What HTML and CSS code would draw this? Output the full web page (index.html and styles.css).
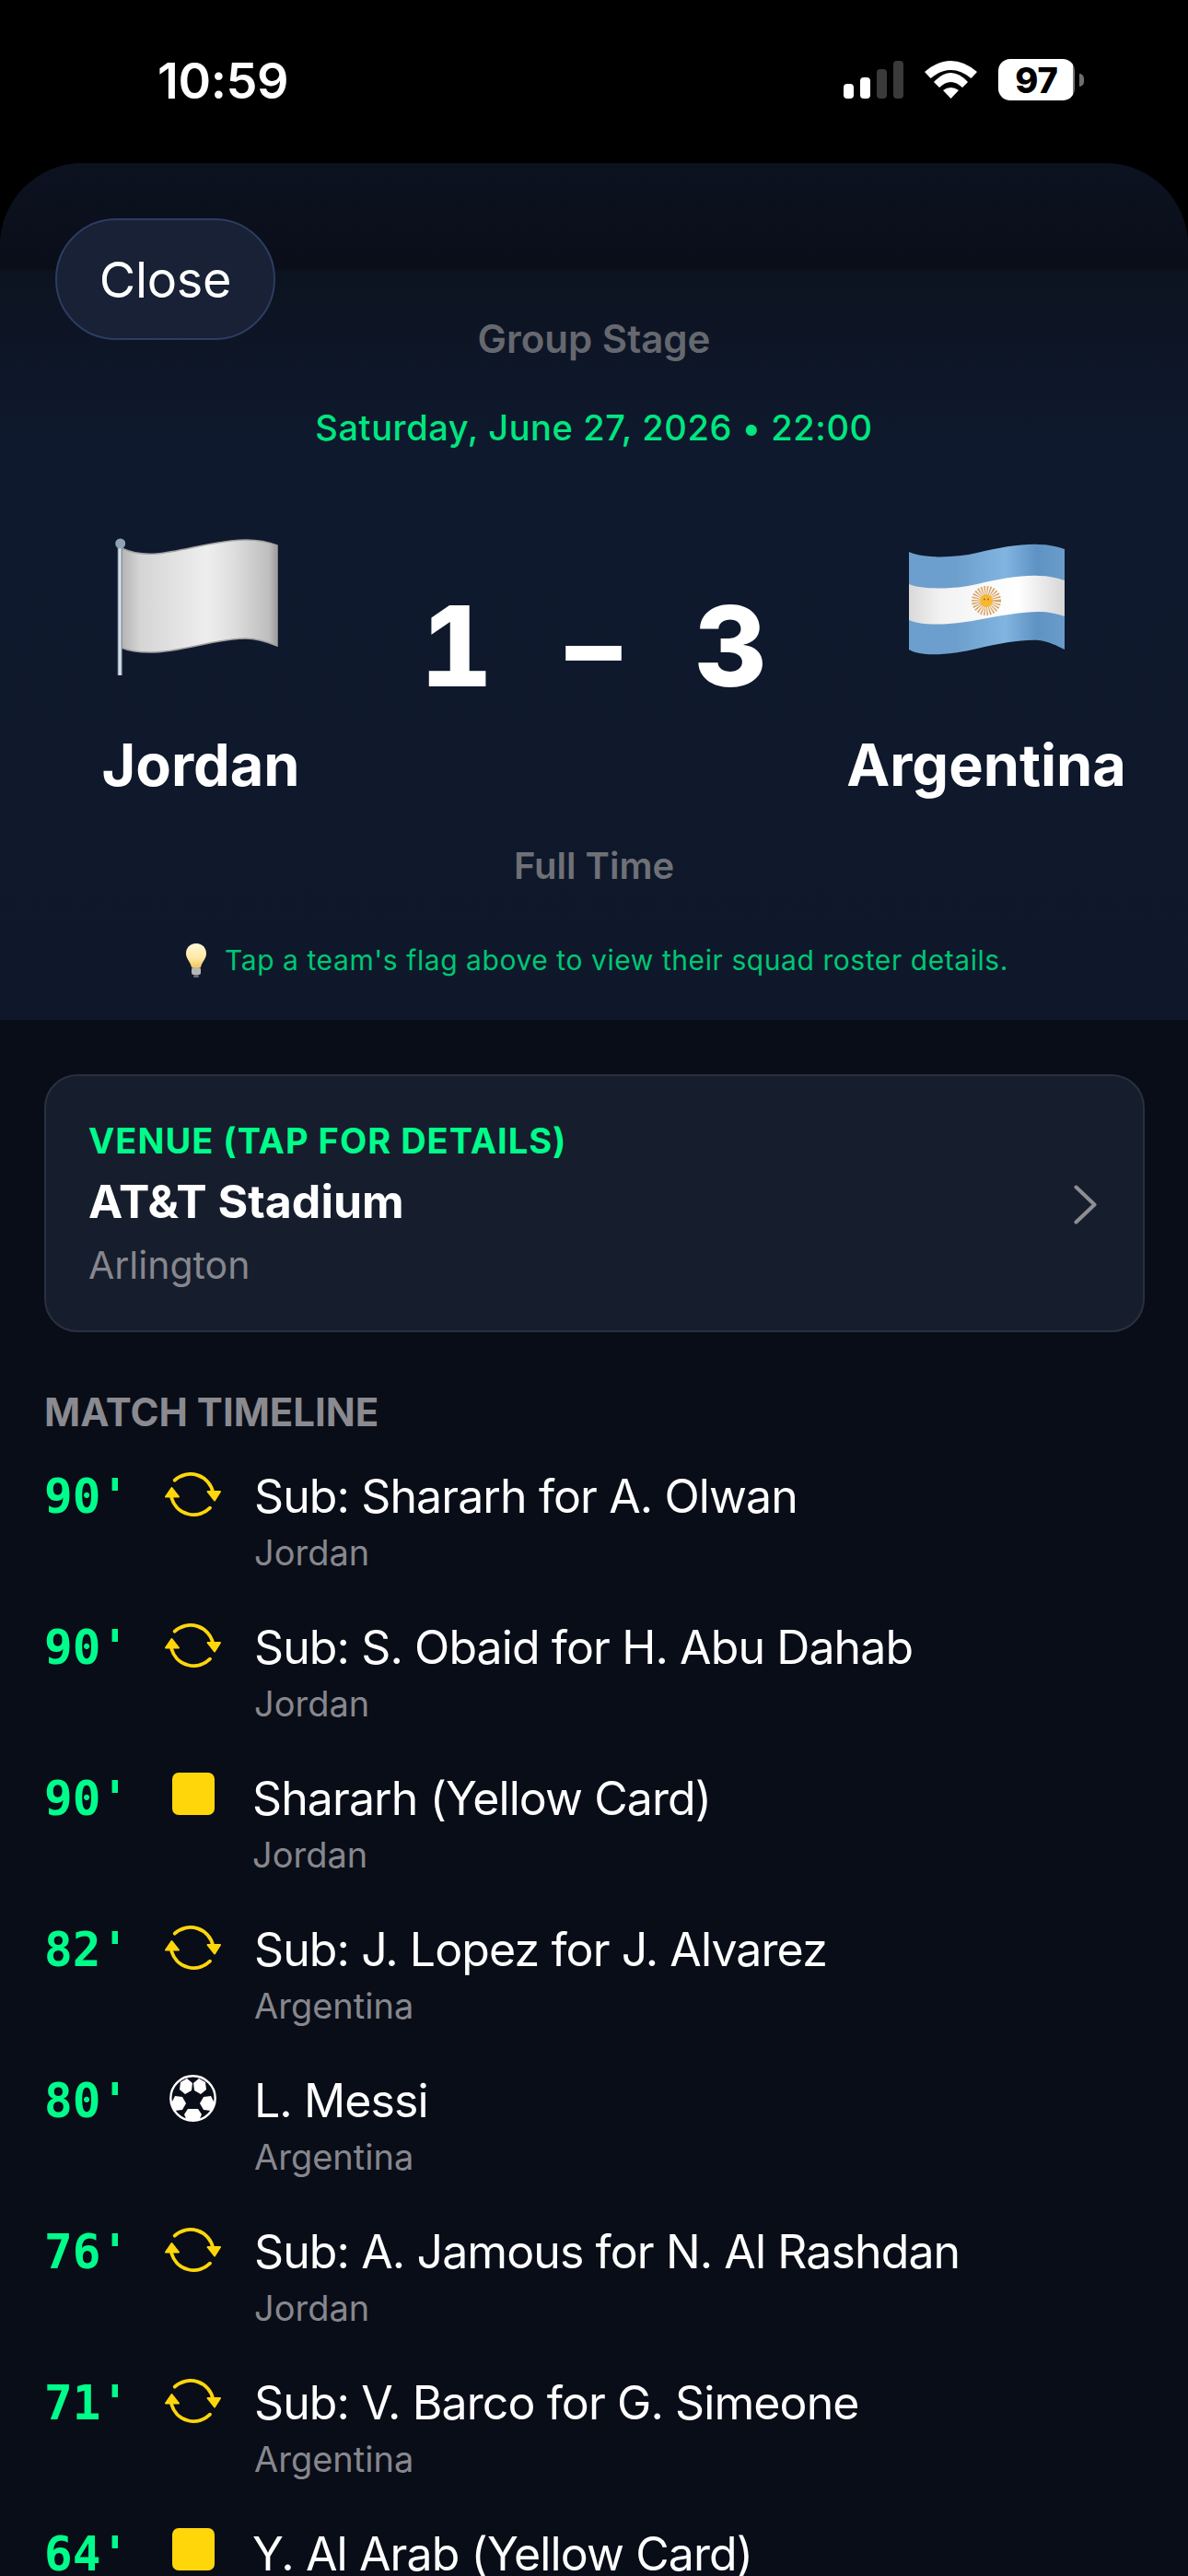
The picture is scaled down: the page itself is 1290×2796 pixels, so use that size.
FILE: index.html
```html
<!DOCTYPE html>
<html lang="en">
<head>
    <meta charset="UTF-8">
    <meta name="viewport" content="width=device-width, initial-scale=1.0">
    <title>Match Details</title>
    <link rel="stylesheet" href="styles.css">
</head>
<body>
    <svg class="defs" width="0" height="0">
        <defs>
            <filter id="soft" x="-5%" y="-5%" width="110%" height="110%">
                <feGaussianBlur stdDeviation="0.7"/>
            </filter>
            <linearGradient id="cloth" x1="0" x2="1" y1="0" y2="0">
                <stop offset="0" stop-color="#b4b4b4"/>
                <stop offset="0.12" stop-color="#d5d5d5"/>
                <stop offset="0.55" stop-color="#eeeeee"/>
                <stop offset="0.72" stop-color="#dedede"/>
                <stop offset="0.95" stop-color="#bdbdbd"/>
                <stop offset="1" stop-color="#9c9c9c"/>
            </linearGradient>
            <linearGradient id="pole" x1="0" x2="1" y1="0" y2="0">
                <stop offset="0" stop-color="#7d93a8"/>
                <stop offset="0.5" stop-color="#eef4f8"/>
                <stop offset="1" stop-color="#6f8397"/>
            </linearGradient>
            <linearGradient id="sky" x1="0" x2="1" y1="0" y2="0">
                <stop offset="0" stop-color="#6c9fce"/>
                <stop offset="0.3" stop-color="#6d9fcd"/>
                <stop offset="0.62" stop-color="#82b4e0"/>
                <stop offset="0.82" stop-color="#5f93c3"/>
                <stop offset="1" stop-color="#6a9ccb"/>
            </linearGradient>
            <linearGradient id="band" x1="0" x2="1" y1="0" y2="0">
                <stop offset="0" stop-color="#d9d9d9"/>
                <stop offset="0.2" stop-color="#f2f2f2"/>
                <stop offset="0.7" stop-color="#ffffff"/>
                <stop offset="1" stop-color="#d6d6d6"/>
            </linearGradient>
            <linearGradient id="bulb" x1="0" x2="0" y1="0" y2="1">
                <stop offset="0" stop-color="#fff6d8"/>
                <stop offset="0.6" stop-color="#ffe9a6"/>
                <stop offset="1" stop-color="#f2c65c"/>
            </linearGradient>
        </defs>
        <symbol id="sub" viewBox="0 0 61 51">
            <path d="M10.7 10.7 A25 25 0 0 1 52.3 24" fill="none" stroke="#ffd60a" stroke-width="3.8" stroke-linecap="round"/>
            <path d="M49 40.7 A25 25 0 0 1 7.3 30" fill="none" stroke="#ffd60a" stroke-width="3.8" stroke-linecap="round"/>
            <path d="M46.5 23 L60 23 L54 32.5 Z" fill="#ffd60a" stroke="#ffd60a" stroke-width="2" stroke-linejoin="round"/>
            <path d="M1 28.5 L15 28.5 L7.5 19 Z" fill="#ffd60a" stroke="#ffd60a" stroke-width="2" stroke-linejoin="round"/>
        </symbol>
        <symbol id="ball" viewBox="0 0 51 51">
            <circle cx="25.5" cy="25.5" r="24.2" fill="#090d18" stroke="#fff" stroke-width="2.4"/>
            <polygon points="12,8 19,4 25,9 24,17 17,21 11,16" fill="#fff"/>
            <polygon points="39,8 32,4 26,9 27,17 34,21 40,16" fill="#fff"/>
            <polygon points="6,23 14,24 18,31 14,38 6,39 2,31" fill="#fff"/>
            <polygon points="45,23 37,24 33,31 37,38 45,39 49,31" fill="#fff"/>
            <polygon points="20,37 31,37 35,43 32,50 19,50 16,43" fill="#fff"/>
        </symbol>
    </svg>

    <div class="status-bar">
        <span class="time">10:59</span>
        <div class="status-icons">
            <svg class="signal" width="65" height="41" viewBox="0 0 65 41">
                <rect x="0" y="25" width="11" height="16" rx="4" fill="#fff"/>
                <rect x="18" y="18" width="11" height="23" rx="4" fill="#fff"/>
                <rect x="36" y="9" width="11" height="32" rx="4" fill="#3a3a3a"/>
                <rect x="54" y="0" width="11" height="41" rx="4" fill="#3a3a3a"/>
            </svg>
            <svg class="wifi" width="57" height="41" viewBox="0 0 57 41">
                <path d="M0 12 Q28.5 -12 57 12 L50.5 19 Q28.5 1 6.5 19 Z" fill="#fff"/>
                <path d="M10 23 Q28.5 3 47 23 L41 29 Q28.5 17 16 29 Z" fill="#fff"/>
                <path d="M20 32 Q28.5 26 37 32 L28.5 41 Z" fill="#fff"/>
            </svg>
            <div class="battery"><span class="battery-level">97</span></div>
            <span class="battery-cap"></span>
        </div>
    </div>

    <div class="sheet">
        <header class="match-header">
            <button class="close-btn">Close</button>
            <div class="stage">Group Stage</div>
            <div class="kickoff">Saturday, June 27, 2026 &bull; 22:00</div>

            <div class="score-row">
                <div class="team">
                    <svg class="flag" width="190" height="160" viewBox="0 0 190 160">
                        <path d="M9 15 C20 20 35 22 47 21 C75 19 110 6 144 6 C156 6 168 8 178 12 L178 121 C168 117 156 113 144 113 C110 113 75 128 40 128 C28 128 18 127 9 123 Z" fill="url(#cloth)" stroke="#a2a2a2" stroke-width="1.5" filter="url(#soft)"/>
                        <rect x="4.7" y="12" width="5" height="141" fill="url(#pole)"/>
                        <circle cx="7.7" cy="10" r="5.5" fill="#8fa3b5"/>
                    </svg>
                    <div class="team-name">Jordan</div>
                </div>
                <div class="score">
                    <span>1</span><span>&ndash;</span><span>3</span>
                </div>
                <div class="team">
                    <svg class="flag" width="190" height="160" viewBox="0 0 190 160">
                        <g filter="url(#soft)">
                            <path d="M11 19 C25 26 60 26 85 20 C110 14 135 10 152 11 C162 11 172 13 180 16 L180 125 C172 121 162 116 152 115 C135 114 110 118 85 124 C60 130 25 134 11 125 Z" fill="url(#sky)"/>
                        </g>
                        <path d="M11 54 C25 60 60 60 85 54 C110 48 135 44 152 45 C162 45 172 47 180 50 L180 89 C172 86 162 84 152 84 C135 84 110 88 85 93 C60 98 25 100 11 93 Z" fill="url(#band)"/>
                        <circle cx="95" cy="72" r="11" fill="none" stroke="#d9a463" stroke-width="10" stroke-dasharray="1.3 1.3"/>
                        <circle cx="95" cy="72" r="7" fill="#f6b830"/>
                        <circle cx="93" cy="70.5" r="1" fill="#a9701f"/>
                        <circle cx="97" cy="70.5" r="1" fill="#a9701f"/>
                    </svg>
                    <div class="team-name">Argentina</div>
                </div>
            </div>

            <div class="match-status">Full Time</div>
            <div class="hint">
                <svg class="hint-bulb" width="22" height="37" viewBox="0 0 22 37">
                    <path d="M11 0 C18 0 22 5 22 11 C22 17 17 20 16 26 L6 26 C5 20 0 17 0 11 C0 5 4 0 11 0 Z" fill="url(#bulb)"/>
                    <rect x="6" y="26" width="10" height="8" rx="2" fill="#b5b5b5"/>
                    <rect x="8" y="34" width="6" height="3" rx="1.5" fill="#6a6a6a"/>
                </svg>
                <span>Tap a team's flag above to view their squad roster details.</span>
            </div>
        </header>

        <main class="content">
            <div class="venue-card">
                <div class="venue-info">
                    <div class="venue-label">VENUE (TAP FOR DETAILS)</div>
                    <div class="venue-name">AT&amp;T Stadium</div>
                    <div class="venue-city">Arlington</div>
                </div>
                <svg class="chevron" width="25" height="43" viewBox="0 0 25 43">
                    <path d="M2.5 2.5 L22.5 21.5 L2.5 40.5" fill="none" stroke="#8e8e93" stroke-width="4" stroke-linecap="round" stroke-linejoin="round"/>
                </svg>
            </div>

            <h3 class="section-title">MATCH TIMELINE</h3>

            <div class="event">
                <span class="minute">90'</span>
                <span class="event-icon"><svg width="61" height="51"><use href="#sub"/></svg></span>
                <div class="event-text"><div class="event-title">Sub: Shararh for A. Olwan</div><div class="event-team">Jordan</div></div>
            </div>
            <div class="event">
                <span class="minute">90'</span>
                <span class="event-icon"><svg width="61" height="51"><use href="#sub"/></svg></span>
                <div class="event-text"><div class="event-title">Sub: S. Obaid for H. Abu Dahab</div><div class="event-team">Jordan</div></div>
            </div>
            <div class="event">
                <span class="minute">90'</span>
                <span class="event-icon"><span class="yellow-card"></span></span>
                <div class="event-text card-text"><div class="event-title">Shararh (Yellow Card)</div><div class="event-team">Jordan</div></div>
            </div>
            <div class="event">
                <span class="minute">82'</span>
                <span class="event-icon"><svg width="61" height="51"><use href="#sub"/></svg></span>
                <div class="event-text"><div class="event-title">Sub: J. Lopez for J. Alvarez</div><div class="event-team">Argentina</div></div>
            </div>
            <div class="event">
                <span class="minute">80'</span>
                <span class="event-icon"><svg width="51" height="51"><use href="#ball"/></svg></span>
                <div class="event-text"><div class="event-title">L. Messi</div><div class="event-team">Argentina</div></div>
            </div>
            <div class="event">
                <span class="minute">76'</span>
                <span class="event-icon"><svg width="61" height="51"><use href="#sub"/></svg></span>
                <div class="event-text"><div class="event-title">Sub: A. Jamous for N. Al Rashdan</div><div class="event-team">Jordan</div></div>
            </div>
            <div class="event">
                <span class="minute">71'</span>
                <span class="event-icon"><svg width="61" height="51"><use href="#sub"/></svg></span>
                <div class="event-text"><div class="event-title">Sub: V. Barco for G. Simeone</div><div class="event-team">Argentina</div></div>
            </div>
            <div class="event">
                <span class="minute">64'</span>
                <span class="event-icon"><span class="yellow-card"></span></span>
                <div class="event-text card-text"><div class="event-title">Y. Al Arab (Yellow Card)</div></div>
            </div>
        </main>
    </div>
</body>
</html>
```

FILE: styles.css
```css
/* Page */
html, body {
    margin: 0;
    padding: 0;
    height: 2796px;
    overflow: hidden;
    background: #000;
}

body {
    font-family: Inter, "Liberation Sans", sans-serif;
    color: #fff;
}

.defs {
    position: absolute;
}

/* Status bar */
.status-bar {
    height: 177px;
    box-sizing: border-box;
    padding: 58px 113px 0 171px;
    display: flex;
    justify-content: space-between;
    align-items: flex-start;
}

.time {
    font-size: 54px;
    font-weight: 600;
    line-height: 60px;
    letter-spacing: -0.4px;
}

.status-icons {
    display: flex;
    align-items: center;
    padding-top: 6px;
}

.signal,
.wifi {
    margin-right: 23px;
}

.battery {
    width: 83px;
    height: 45px;
    background: linear-gradient(90deg, #fff 97%, #777 97%);
    border-radius: 13px;
    display: flex;
    align-items: center;
    justify-content: center;
}

.battery-level {
    color: #000;
    font-size: 38px;
    font-weight: 800;
}

.battery-cap {
    width: 5px;
    height: 14px;
    margin-left: 5px;
    background: #6e6e6e;
    border-radius: 0 5px 5px 0;
}

/* Sheet */
.sheet {
    height: 2619px;
    overflow: hidden;
    background: #090d18;
    border-radius: 90px 90px 0 0;
}

.match-header {
    position: relative;
    height: 930px;
    box-sizing: border-box;
    padding-top: 166px;
    text-align: center;
    background: linear-gradient(180deg, #0c1220 0, #0a0e19 115px, #0c1320 117px, #0f192d 300px, #0f182b 100%);
}

.close-btn {
    position: absolute;
    left: 60px;
    top: 60px;
    width: 239px;
    height: 132px;
    border: 2px solid #2c3d63;
    border-radius: 66px;
    background: #182135;
    color: #fff;
    font-family: Inter, sans-serif;
    font-size: 54px;
    font-weight: 400;
    letter-spacing: -0.3px;
}

.stage {
    font-size: 42px;
    line-height: 50px;
    font-weight: 600;
    color: #66686f;
}

.kickoff {
    margin-top: 46px;
    font-size: 38px;
    line-height: 50px;
    font-weight: 500;
    color: #00e680;
    letter-spacing: 0.6px;
}

.score-row {
    margin-top: 91px;
    display: flex;
    justify-content: space-between;
    padding: 0 69px 0 68px;
}

.team {
    width: 300px;
    display: flex;
    flex-direction: column;
    align-items: center;
}

.team-name {
    margin-top: 52px;
    font-size: 63px;
    line-height: 76px;
    font-weight: 700;
    white-space: nowrap;
}

.flag {
    display: block;
}

.score {
    width: 376px;
    margin-top: 56px;
    display: flex;
    justify-content: space-between;
    font-size: 121px;
    line-height: 130px;
    font-weight: 800;
    font-feature-settings: "tnum";
}

.match-status {
    margin-top: 47px;
    font-size: 40px;
    line-height: 50px;
    font-weight: 600;
    color: #6f7177;
}

.hint {
    margin-top: 57px;
    padding-left: 7px;
    display: flex;
    justify-content: center;
    align-items: center;
    gap: 20px;
    font-size: 30px;
    line-height: 40px;
    color: #00c773;
    letter-spacing: 0.57px;
}

/* Venue + timeline */
.content {
    padding: 59px 47px 0 48px;
}

.venue-card {
    height: 280px;
    box-sizing: border-box;
    padding: 47px 50px 0 46px;
    display: flex;
    justify-content: space-between;
    align-items: flex-start;
    background: #161e2e;
    border: 2px solid #2a3040;
    border-radius: 36px;
}

.venue-label {
    font-size: 38px;
    line-height: 46px;
    font-weight: 700;
    letter-spacing: 1px;
    color: #00fc8a;
}

.venue-name {
    margin-top: 12px;
    font-size: 50px;
    line-height: 62px;
    font-weight: 700;
}

.venue-city {
    margin-top: 13px;
    font-size: 41px;
    line-height: 50px;
    color: #87878d;
}

.chevron {
    margin-top: 71px;
}

.section-title {
    margin: 62px 0 0 0;
    font-size: 42px;
    line-height: 50px;
    font-weight: 700;
    color: #8a8a90;
}

.event {
    height: 164px;
    display: flex;
    align-items: flex-start;
}

.minute {
    width: 131px;
    padding-top: 37px;
    font-family: "DejaVu Sans Mono", "Liberation Mono", monospace;
    font-size: 51px;
    line-height: 60px;
    font-weight: 700;
    color: #00fc8a;
}

.event-icon {
    width: 61px;
    height: 51px;
    margin-top: 38px;
    margin-right: 36px;
    display: flex;
    align-items: flex-start;
    justify-content: center;
}

.yellow-card {
    display: block;
    width: 46px;
    height: 46px;
    background: #ffd60a;
    border-radius: 7px;
}

.event-text {
    padding-top: 35px;
}

.card-text {
    margin-left: -2px;
}

.event-title {
    font-size: 50px;
    line-height: 62px;
    font-weight: 400;
    letter-spacing: -0.9px;
}

.event-team {
    margin-top: 7px;
    font-size: 38px;
    line-height: 46px;
    color: #87878d;
}
```
